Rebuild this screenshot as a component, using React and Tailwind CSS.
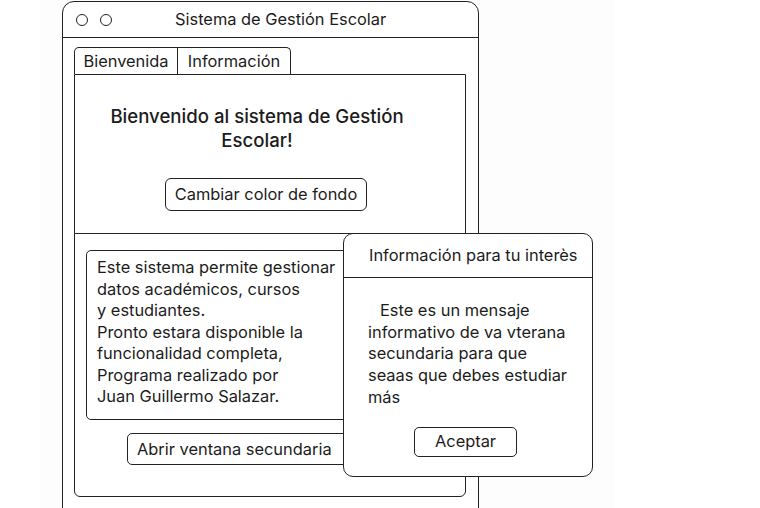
import React from 'react'

const line = 'border-[#222]'

const App = () => {
    return (
        <div className="w-[760px] h-[508px] overflow-hidden bg-white text-[#1c1c1c]" style={{ fontFamily: 'Inter, "Liberation Sans", sans-serif' }}>
            <div className="relative ml-[40px] w-[575px] h-[508px] bg-[#fdfdfd] pt-[1px]">
                {/* ventana principal */}
                <div className={`ml-[22px] w-[417px] h-[540px] border-[1.5px] ${line} rounded-t-[12px] bg-white flex flex-col`}>
                    <div className={`h-[36px] shrink-0 border-b-[1.5px] ${line} flex items-center pl-[13px]`}>
                        <span className={`w-[12px] h-[12px] rounded-full border-[1.5px] ${line}`}></span>
                        <span className={`ml-[12px] w-[12px] h-[12px] rounded-full border-[1.5px] ${line}`}></span>
                        <span className="ml-[63px] text-[16.4px]">Sistema de Gestión Escolar</span>
                    </div>

                    <div className="px-[11px] pt-[9px] flex flex-col">
                        <div className="flex h-[27px] text-[16.4px]">
                            <div className={`w-[104px] border-[1.5px] border-b-0 ${line} rounded-tl-[5px] flex items-center justify-center`}>Bienvenida</div>
                            <div className={`w-[113px] border-[1.5px] border-l-0 border-b-0 ${line} rounded-tr-[5px] flex items-center justify-center`}>Información</div>
                        </div>

                        <div className={`w-[392px] h-[423px] border-[1.5px] ${line} rounded-b-[6px] flex flex-col`}>
                            <div className={`h-[159px] shrink-0 border-b-[1.5px] ${line} flex flex-col items-center pt-[29px]`}>
                                <h1 className="pr-[26px] w-full text-center text-[18.6px] leading-[24px] font-medium">
                                    Bienvenido al sistema de Gestión<br />Escolar!
                                </h1>
                                <button className={`mt-[26px] mr-[8px] w-[202px] h-[33px] border-[1.5px] ${line} rounded-[6px] text-[16.4px] bg-white`}>
                                    Cambiar color de fondo
                                </button>
                            </div>

                            <div className="pl-[11px] pt-[16px] flex flex-col">
                                <div className={`w-[280px] h-[170px] border-[1.5px] ${line} rounded-[5px] pl-[10px] pt-[6px] text-[16.4px] leading-[21.5px]`}>
                                    Este sistema permite gestionar<br />
                                    datos académicos, cursos<br />
                                    y estudiantes.<br />
                                    Pronto estara disponible la<br />
                                    funcionalidad completa,<br />
                                    Programa realizado por<br />
                                    Juan Guillermo Salazar.
                                </div>
                                <button className={`ml-[41px] mt-[13px] w-[230px] h-[32px] border-[1.5px] ${line} rounded-[5px] text-[16.4px] text-left pl-[9px] bg-white`}>
                                    Abrir ventana secundaria
                                </button>
                            </div>
                        </div>
                    </div>
                </div>

                {/* ventana secundaria */}
                <div className={`absolute left-[303px] top-[233px] w-[250px] h-[244px] border-[1.5px] ${line} rounded-[10px] bg-white flex flex-col`}>
                    <div className={`h-[44px] shrink-0 border-b-[1.5px] ${line} flex items-center pl-[25px] text-[16.4px]`}>
                        Información para tu interès
                    </div>
                    <div className="pl-[24px] pt-[22px] text-[16.4px] leading-[21.7px]">
                        <span className="pl-[12px]">Este es un mensaje</span><br />
                        informativo de va vterana<br />
                        secundaria para que<br />
                        seaas que debes estudiar<br />
                        más
                    </div>
                    <div className="flex justify-center pt-[18px] pr-[5px]">
                        <button className={`w-[103px] h-[30px] border-[1.5px] ${line} rounded-[5px] text-[16.4px] bg-white`}>
                            Aceptar
                        </button>
                    </div>
                </div>
            </div>
        </div>
    )
}

export default App
